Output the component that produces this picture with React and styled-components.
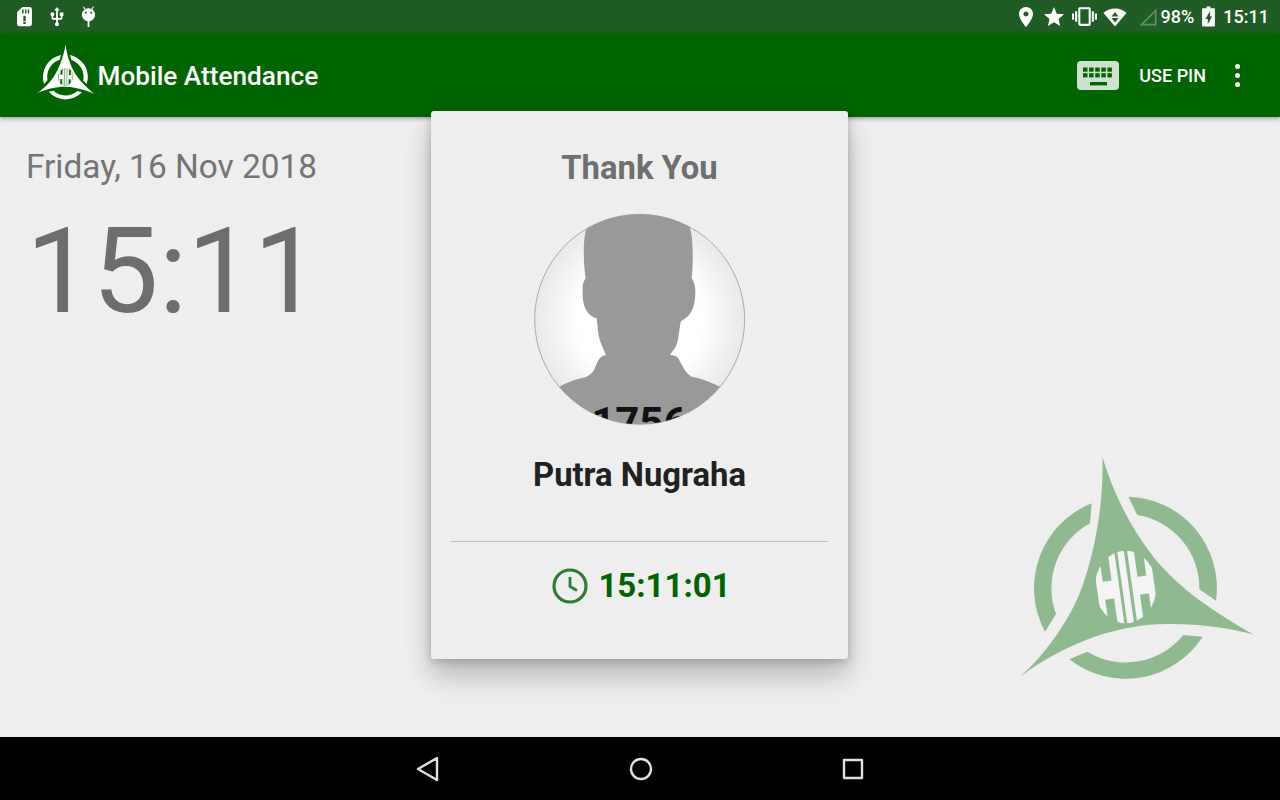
import React from "react";
import styled, { createGlobalStyle } from "styled-components";

const GlobalStyle = createGlobalStyle`
   html, body {
      margin: 0;
      padding: 0;
      background: #eeeeee;
      font-family: "Roboto", sans-serif;
   }
`;

// logo drawn in a 750x705 box, same mark for the app bar and the watermark
const HikLogo = ({ width, height, color, inner, letters, tilt, id }) => (
   <svg width={width} height={height} viewBox="0 0 750 705" style={{ overflow: "visible", display: "block" }}>
      <defs>
         <clipPath id={id}>
            <ellipse cx="347" cy="411" rx="92" ry="109" />
         </clipPath>
      </defs>
      <g fill={color} transform={`rotate(${tilt} 346 414)`}>
         <path d="M277 20 C282 130 262 300 205 440 C170 520 100 620 30 680 C180 570 340 520 480 522 C580 522 660 535 730 553 C620 490 510 420 430 320 C360 230 310 130 277 20Z" />
         <path d="M245 160 A274 274 0 0 0 105 545 L138 492 A222 222 0 0 1 240 220Z" />
         <path d="M355 140 A274 274 0 0 1 618 452 L568 418 A222 222 0 0 0 382 195Z" />
         <path d="M578 560 A274 274 0 0 1 178 628 L232 605 A222 222 0 0 0 520 555Z" />
         {inner && <ellipse cx="347" cy="411" rx="92" ry="109" fill={inner} />}
         <g clipPath={`url(#${id})`}>
            <text
               x="256"
               y="530"
               fontFamily="Liberation Sans, sans-serif"
               fontWeight="700"
               fontSize="330"
               textLength="182"
               lengthAdjust="spacingAndGlyphs"
               fill={letters}
               stroke={letters}
               strokeWidth="14"
               transform="rotate(-8 347 411)"
            >
               HIH
            </text>
         </g>
      </g>
   </svg>
);

const Icon = ({ d, size = 24, fill = "#fff", $gap = 0 }) => (
   <StatusIcon width={size} height={size} viewBox="0 0 24 24" fill={fill} fillRule="evenodd" $gap={$gap}>
      <path d={d} />
   </StatusIcon>
);

const icons = {
   sd: "M9.500 1h8.500C19.500 1 20.500 2 20.500 3.500v17c0 1.400-1 2.500-2.500 2.500H6C4.500 23 3.500 21.900 3.500 20.500V7zM9.300 4v4.500h1.700V4zM12.500 4v4.500h1.700V4zM15.700 4v4.500h1.700V4zM10.700 11v6h2.600v-6zM10.700 18v2.500h2.600V18z",
   usb: "M15 7v4h1v2h-3V5h2l-3-4-3 4h2v8H8v-2.070c.7-.37 1.200-1.080 1.200-1.930 0-1.210-.99-2.200-2.200-2.200-1.210 0-2.200.99-2.200 2.200 0 .85.5 1.560 1.200 1.930V13c0 1.110.89 2 2 2h3v3.050c-.71.37-1.200 1.100-1.200 1.950 0 1.220.99 2.200 2.200 2.200 1.210 0 2.200-.98 2.200-2.200 0-.85-.49-1.580-1.200-1.950V15h3c1.110 0 2-.89 2-2v-2h1V7h-4z",
   android: "M5.600 1.200l1-.7 2.200 2.900A7.600 7.600 0 0 1 12 2.700c1.200 0 2.200.3 3.200.7L17.400.5l1 .7-2.100 2.900c1.900 1.300 3.200 3.500 3.200 6 0 3.700-2.900 6.900-6.500 7.300V24h-2v-6.600C7.400 17 4.500 13.800 4.500 10.100c0-2.500 1.200-4.700 3.200-6zM9 6.500a1.200 1.200 0 1 0 0 2.400 1.200 1.200 0 0 0 0-2.400zM15 6.500a1.200 1.200 0 1 0 0 2.400 1.200 1.200 0 0 0 0-2.400z",
   pin: "M12 2C8.130 2 5 5.130 5 9c0 5.250 7 13 7 13s7-7.750 7-13c0-3.870-3.130-7-7-7zm0 9.500c-1.380 0-2.500-1.120-2.500-2.500s1.120-2.500 2.500-2.500 2.500 1.120 2.500 2.500-1.120 2.500-2.500 2.500z",
   star: "M12 17.270L18.180 21l-1.640-7.030L22 9.240l-7.190-.61L12 2 9.190 8.630 2 9.240l5.460 4.730L5.820 21z",
   vibrate: "M0 15h2V9H0v6zm3 2h2V7H3v10zm19-8v6h2V9h-2zm-3 8h2V7h-2v10zM16.500 3h-9C6.670 3 6 3.670 6 4.500v15c0 .83.67 1.500 1.500 1.500h9c.83 0 1.500-.67 1.500-1.500v-15c0-.83-.67-1.500-1.500-1.500zM16 19H8V5h8v14z",
   wifi: "M12 21.500L.5 8C3.500 5 7.500 3.500 12 3.500S20.500 5 23.500 8zM12 7l-3.500 4.500h7zM8.500 13l3.500 4.500 3.500-4.500z",
   battery: "M10 1.500h4v2h3.800c.5 0 .9.4.9.9v17.200c0 .5-.4.9-.9.9H6.200c-.5 0-.9-.4-.9-.9V4.400c0-.5.4-.9.9-.9H10zM11.200 20v-5.500H8.800L13.600 6.500v5.500h2.200z",
};

export default function App() {
   return (
      <Page>
         <GlobalStyle />
         <StatusBar>
            <StatusGroup>
               <Icon d={icons.sd} size={21} />
               <Icon d={icons.usb} size={22} $gap={11} />
               <Icon d={icons.android} size={21} $gap={10} />
            </StatusGroup>
            <StatusGroup>
               <Icon d={icons.pin} size={24} />
               <Icon d={icons.star} size={24} $gap={4} />
               <Icon d={icons.vibrate} size={25} $gap={6} />
               <Icon d={icons.wifi} size={24} $gap={6} />
               <SignalIcon width="20" height="20" viewBox="0 0 20 20">
                  <path d="M18.500 1.500v17h-17zM16.800 5.600L5.600 16.800h11.200z" fill="#fff" fillOpacity="0.3" fillRule="evenodd" />
               </SignalIcon>
               <StatusText>98%</StatusText>
               <Icon d={icons.battery} size={23} $gap={3} />
               <StatusClock>15:11</StatusClock>
            </StatusGroup>
         </StatusBar>

         <AppBar>
            <Brand>
               <LogoSlot>
                  <HikLogo id="logo-small" width={61.5} height={58} color="#ffffff" inner="#006400" letters="#ffffff" tilt={10.3} />
               </LogoSlot>
               <AppTitle>Mobile Attendance</AppTitle>
            </Brand>
            <Actions>
               <KeyboardBadge>
                  <svg width="42" height="29" viewBox="0 0 42 29">
                     <rect width="42" height="29" rx="4" fill="#cfe0cf" />
                     <g fill="#006400">
                        {[0, 1, 2, 3, 4].map((i) => (
                           <React.Fragment key={i}>
                              <rect x={6 + i * 6.1} y="6.500" width="4.500" height="4.200" />
                              <rect x={6 + i * 6.1} y="12.200" width="4.500" height="4.200" />
                           </React.Fragment>
                        ))}
                        <rect x="13" y="21" width="17" height="3.400" />
                     </g>
                  </svg>
               </KeyboardBadge>
               <PinLabel>USE PIN</PinLabel>
               <MoreDots>
                  <span />
                  <span />
                  <span />
               </MoreDots>
            </Actions>
         </AppBar>

         <Main>
            <ClockColumn>
               <DateLine>Friday, 16 Nov 2018</DateLine>
               <BigClock>15:11</BigClock>
            </ClockColumn>

            <Card>
               <CardTitle>Thank You</CardTitle>
               <svg width="240" height="240" viewBox="0 0 720 720" style={{ display: "block", margin: "-15px 0" }}>
                  <defs>
                     <radialGradient id="avatar-bg" cx="50%" cy="50%" r="50%">
                        <stop offset="60%" stopColor="#ffffff" />
                        <stop offset="100%" stopColor="#e8e8e8" />
                     </radialGradient>
                     <clipPath id="avatar-clip">
                        <circle cx="359" cy="358" r="315" />
                     </clipPath>
                  </defs>
                  <circle cx="359" cy="358" r="315" fill="url(#avatar-bg)" stroke="#ababab" strokeWidth="3" />
                  <g clipPath="url(#avatar-clip)">
                     <path
                        fill="#999999"
                        d="M200 30 L200 85 C188 115 190 190 197 235 C190 245 187 255 188 265 C186 300 192 345 230 355 L235 400 C238 425 250 445 258 465 C240 468 235 480 228 495 C222 515 212 525 195 532 C165 538 140 548 118 560 L118 720 L600 720 L600 560 C575 548 545 535 515 530 C498 520 490 505 475 475 C470 468 460 465 450 465 C460 450 472 440 475 410 L482 365 C495 355 525 345 526 280 C527 260 522 245 515 235 C520 190 520 115 510 85 L510 30Z"
                     />
                     <text x="358" y="710" textAnchor="middle" fontFamily="Roboto, sans-serif" fontWeight="700" fontSize="126" fill="#111111">
                        1756
                     </text>
                  </g>
               </svg>
               <PersonName>Putra Nugraha</PersonName>
               <Divider />
               <TimeRow>
                  <svg width="36" height="36" viewBox="0 0 36 36" fill="none" stroke="#2e7d32" strokeWidth="3.200">
                     <circle cx="18" cy="18" r="16" />
                     <path d="M18 9v9.500l7 4" strokeWidth="2.800" />
                  </svg>
                  <CheckTime>15:11:01</CheckTime>
               </TimeRow>
            </Card>

            <WatermarkColumn>
               <HikLogo id="logo-large" width={250} height={235} color="#8fba8f" letters="#f4f4f4" tilt={0} />
            </WatermarkColumn>
         </Main>

         <NavBar>
            <svg width="24" height="26" viewBox="0 0 24 26" fill="none" stroke="#e0e0e0" strokeWidth="2.400" strokeLinejoin="round">
               <path d="M2 13L21 2v22z" />
            </svg>
            <svg width="24" height="24" viewBox="0 0 24 24" fill="none" stroke="#e0e0e0" strokeWidth="2.400">
               <circle cx="12" cy="12" r="10" />
            </svg>
            <svg width="22" height="22" viewBox="0 0 22 22" fill="none" stroke="#e0e0e0" strokeWidth="2.400" strokeLinejoin="round">
               <rect x="2" y="2" width="18" height="18" />
            </svg>
         </NavBar>
      </Page>
   );
}

// CSS styles

const Page = styled.div`
   width: 1280px;
   height: 800px;
   display: flex;
   flex-direction: column;
   overflow: hidden;
   background: #eeeeee;
`;

const StatusBar = styled.div`
   height: 33px;
   flex: none;
   display: flex;
   align-items: center;
   justify-content: space-between;
   padding: 0 11px 0 14px;
   background: #1f5d25;
`;

const StatusGroup = styled.div`
   display: flex;
   align-items: center;
`;

const StatusIcon = styled.svg`
   display: block;
   flex: none;
   margin-left: ${(p) => p.$gap}px;
`;

const SignalIcon = styled.svg`
   display: block;
   margin-left: 11px;
`;

const StatusText = styled.span`
   margin-left: 3px;
   color: #ffffff;
   font-size: 18px;
   font-weight: 500;
`;

const StatusClock = styled(StatusText)`
   margin-left: 3px;
`;

const AppBar = styled.header`
   height: 84px;
   flex: none;
   display: flex;
   align-items: center;
   justify-content: space-between;
   padding: 0 40px 0 37px;
   background: #006400;
   box-shadow: 0 2px 4px rgba(0, 0, 0, 0.3);
   position: relative;
   z-index: 1;
`;

const Brand = styled.div`
   display: flex;
   align-items: center;
`;

const LogoSlot = styled.div`
   margin-bottom: 7px;
`;

const AppTitle = styled.h1`
   margin: 1px 0 0 -1px;
   color: #ffffff;
   font-size: 26.2px;
   font-weight: 500;
`;

const Actions = styled.div`
   display: flex;
   align-items: center;
`;

const KeyboardBadge = styled.div`
   display: flex;
   margin-right: 20px;
`;

const PinLabel = styled.span`
   color: #ffffff;
   font-size: 18px;
   font-weight: 500;
`;

const MoreDots = styled.div`
   display: flex;
   flex-direction: column;
   gap: 4px;
   margin-left: 29px;
   span {
      width: 5px;
      height: 5px;
      border-radius: 50%;
      background: #ffffff;
   }
`;

const Main = styled.main`
   flex: 1;
   display: grid;
   grid-template-columns: 431px 417px 1fr;
   position: relative;
   z-index: 2;
`;

const ClockColumn = styled.section`
   padding: 31px 0 0 26px;
`;

const DateLine = styled.div`
   color: #757575;
   font-size: 33.4px;
   line-height: 38px;
`;

const BigClock = styled.div`
   color: #6d6d6d;
   font-size: 118px;
   line-height: 148px;
   margin-top: 12px;
`;

const Card = styled.section`
   height: 548px;
   margin-top: -6px;
   box-sizing: border-box;
   display: flex;
   flex-direction: column;
   align-items: center;
   padding: 38px 20px 0;
   background: #eeeeee;
   border-radius: 3px;
   box-shadow: 0 16px 28px rgba(0, 0, 0, 0.24), 0 2px 8px rgba(0, 0, 0, 0.2);
`;

const CardTitle = styled.h2`
   margin: 0 0 28px;
   color: #6f6f6f;
   font-size: 32.8px;
   line-height: 38px;
   font-weight: 700;
`;

const PersonName = styled.div`
   margin-top: 30px;
   color: #212121;
   font-size: 32.8px;
   line-height: 40px;
   font-weight: 700;
`;

const Divider = styled.div`
   width: 100%;
   height: 1px;
   margin-top: 46px;
   background: #bdbdbd;
`;

const TimeRow = styled.div`
   display: flex;
   align-items: center;
   gap: 10px;
   margin: 24px 0 0 4px;
`;

const CheckTime = styled.span`
   color: #006400;
   font-size: 33px;
   font-weight: 700;
`;

const WatermarkColumn = styled.aside`
   display: flex;
   align-items: flex-end;
   justify-content: flex-end;
   padding: 0 20px 52px 0;
`;

const NavBar = styled.nav`
   height: 63px;
   flex: none;
   display: flex;
   align-items: center;
   justify-content: center;
   gap: 189px;
   background: #000000;
   svg {
      display: block;
   }
`;
